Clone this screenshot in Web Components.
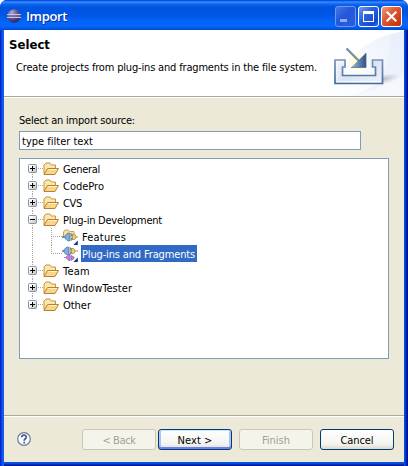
<!DOCTYPE html>
<html lang="en"><head><meta charset="utf-8"><title>Import</title>
<style>html,body{margin:0;background:#fff;overflow:hidden}body{font:11px/17px "DejaVu Sans Condensed","DejaVu Sans",sans-serif;color:#000}</style>
</head><body><import-dialog></import-dialog>
<script>
const define=(name,html,setup)=>customElements.define(name,class extends HTMLElement{
 connectedCallback(){
  if(this.shadowRoot)return;
  const t=document.createElement('template');t.innerHTML=html;
  this.attachShadow({mode:'open'}).append(t.content.cloneNode(true));
  if(setup)setup(this,this.shadowRoot);
 }
});
// Text label whose tracking is tuned to a fixed advance width.
define('fit-text','<style>:host{display:block;white-space:pre;flex:none}span{display:inline-block}</style><span></span>',(h,r)=>{
 const s=r.querySelector('span'),v=h.getAttribute('text'),w=+h.getAttribute('w');s.textContent=v;
 s.style.letterSpacing=(w-s.getBoundingClientRect().width)/v.length+'px';
});
define('eclipse-logo',`<style>:host{display:block;width:16px;height:16px}svg{display:block}</style>
<svg width="16" height="16"><defs><radialGradient id="g" cx=".35" cy=".25" r=".8"><stop offset="0" stop-color="#b9a9d2"/><stop offset=".45" stop-color="#695999"/><stop offset="1" stop-color="#29205e"/></radialGradient></defs>
<circle cx="8" cy="8" r="6.7" fill="url(#g)"/><path d="M1 6.5H15M1 9.5H15" stroke="#c5c6e2"/><path d="M1.5 8H14.5" stroke="#7776b1"/></svg>`);
define('caption-button',`<style>:host{display:block;box-sizing:border-box;width:21px;height:21px;border:1px solid #fff;border-radius:3px;background:linear-gradient(135deg,#6f99f4,#2c62df 40%,#1748cd 80%,#2c70ef)}
:host([kind=min]){border-color:#7397ed;background:linear-gradient(135deg,#4776e7,#2356da 45%,#2961df)}
:host([kind=close]){background:linear-gradient(135deg,#f09a80,#e05a35 40%,#cf3a12 80%,#b93410)}svg{display:block}</style><svg width="19" height="19"></svg>`,(h,r)=>{
 r.querySelector('svg').innerHTML={min:'<path d="M4 12H11V15H4Z" fill="#8fabf0"/>',max:'<path d="M4 4H15V15H4ZM5 7V14H14V7Z" fill="#fff" fill-rule="evenodd"/>',close:'<path d="M4.7 4.7L14.3 14.3M14.3 4.7L4.7 14.3" stroke="#fff" stroke-width="2.2"/>'}[h.getAttribute('kind')];
});
define('title-bar',`<style>:host{display:flex;box-sizing:border-box;height:30px;padding:6px 6px 0;border-radius:7px 7px 0 0;background:linear-gradient(#0831d9 0,#0d66ef 1px,#3b8dfb 2px,#0f68ef 4px,#0054df 7px,#0055e5 15px,#0463f7 21px,#0566fc 26px,#005bec 28px,#0048cd 30px)}
eclipse-logo{margin-top:2px}fit-text{margin:0 0 0 4px;font:600 13px/21px "Open Sans",sans-serif;color:#fff;text-shadow:1px 1px #10309b}div{display:flex;gap:2px;margin-left:auto}</style>
<eclipse-logo></eclipse-logo><fit-text text="Import" w="41"></fit-text><div><caption-button kind="min"></caption-button><caption-button kind="max"></caption-button><caption-button kind="close"></caption-button></div>`);
define('import-art',`<style>:host{display:block;width:75px;height:66px;margin-left:auto}svg{display:block}</style>
<svg width="75" height="66" viewBox="329 30 75 66"><defs>
<linearGradient id="a" x1="0" y1="1" x2="1" y2="0"><stop offset="0" stop-color="#fff"/><stop offset="1" stop-color="#dfe8f8"/></linearGradient>
<linearGradient id="b" x1="0" y1="0" x2="1" y2="1"><stop offset="0" stop-color="#f1f6fc"/><stop offset=".5" stop-color="#dce4f1"/><stop offset="1" stop-color="#eef3fb"/></linearGradient>
<linearGradient id="c" x1="0" y1="0" x2="0" y2="1"><stop offset="0" stop-color="#7893b8"/><stop offset="1" stop-color="#426ba4"/></linearGradient>
<linearGradient id="d" x1="0" x2="1"><stop offset="0" stop-color="#a3bad5"/><stop offset="1" stop-color="#2b5387"/></linearGradient>
<radialGradient id="y"><stop offset="0" stop-color="#fffbd0"/><stop offset=".7" stop-color="#fffce0"/><stop offset="1" stop-color="#fff" stop-opacity="0"/></radialGradient>
<radialGradient id="s"><stop offset="0" stop-color="#8e8ca5" stop-opacity=".55"/><stop offset="1" stop-color="#bbb4c5" stop-opacity="0"/></radialGradient></defs>
<path d="M329 96C340 60 365 38 404 31V96Z" fill="url(#a)" opacity=".6"/><path d="M347 96C381 91 389 68 391 35L404 31V96Z" fill="#e5edfa" opacity=".5"/><path d="M329 96C365 97 390 83 404 74V96Z" fill="#fff" opacity=".4"/>
<ellipse cx="384" cy="79" rx="17" ry="5" fill="url(#s)" transform="rotate(-12 384 79)"/><circle cx="358" cy="62" r="11" fill="url(#y)"/>
<path d="M335 60H345V67H342.5V75.5H375.5V67H372.5V60H382.5V83.5H335Z" fill="url(#b)" stroke="url(#c)" stroke-width="1.7"/><path d="M337 81.5V62H343.5M337 81.5H380.5" fill="none" stroke="#fff" opacity=".7"/>
<path d="M346.5 48.5L359 61" stroke="#7890ac" stroke-width="2.4"/><path d="M366 53V67.5H351Z" fill="url(#d)"/><path d="M351 67.5H366V53" fill="none" stroke="#4c6c96" stroke-width=".8"/></svg>`);
define('wizard-header',`<style>:host{display:flex;box-sizing:border-box;height:68px;background:#fff;border-bottom:1px solid #fff;box-shadow:inset 0 -1px #aca899}
div{padding:6px 0 0 5px}fit-text.h{font:bold 13px/18px "DejaVu Sans Condensed",sans-serif}fit-text.d{margin:5px 0 0 7px}</style>
<div><fit-text class="h" text="Select" w="41"></fit-text><fit-text class="d" text="Create projects from plug-ins and fragments in the file system." w="301"></fit-text></div><import-art></import-art>`);
define('filter-field',`<style>:host{display:block;box-sizing:border-box;width:342px;height:19px;border:1px solid #7f9db9;background:#fff;padding:1px 2px}</style><fit-text text="type filter text" w="71"></fit-text>`);
define('tree-icon','<style>:host{display:block;width:16px;height:16px;flex:none}svg{display:block}</style><svg width="16" height="16"></svg>',(h,r)=>{
 const folder='<path d="M1 13V4L3 2H7L8.5 4H12.5V7" fill="#fae7ab" stroke="#c8943f"/><path d="M1 13.5L4.5 7.5H15.5L12 13.5Z" fill="#f9d686" stroke="#b98032"/><path d="M5 8.5H14" stroke="#fff2c6"/>';
 const arrow='<path d="M15.8 11.5V16H11.3Z" fill="#123d78"/>';
 const plug=(c,d)=>`<path d="M0 7H3M9 5H11M9 9H11" stroke="${d}" fill="none" stroke-width="1.3"/><path d="M3 5.5L6 3H7.5V11H6L3 8.5Z" fill="${c}" stroke="${d}" stroke-width=".8"/><path d="M9 3V11" stroke="${d}"/>`;
 r.querySelector('svg').innerHTML={folder,
 feature:'<path d="M1.5 9V3L3 1H6L7.5 2.5H12V6" fill="#fae3a2" stroke="#cda049"/><g transform="translate(0 1)">'+plug('#81aed7','#547eab')+'</g><path d="M10.5 5.5H12.5L14 7V9L12.5 10.5H10.5ZM14 8H16" fill="#f3cf68" stroke="#a18b4d" stroke-width=".8"/>'+arrow,
 plug:'<g transform="translate(-1 -2)">'+plug('#81aed7','#547eab')+'</g><path d="M9.5 2.5H11.5L13 4V6L11.5 7.5H9.5ZM13 5H16" fill="#f3cf68" stroke="#a18b4d" stroke-width=".8"/><path d="M2 11.5H4M4.5 10.5L7 8.5H8V14.5H7L4.5 12.5ZM9 9.5L12 11V12.5L9 14.5Z" fill="#c083d9" stroke="#9460b5" stroke-width=".8"/>'+arrow}[h.getAttribute('kind')];
});
define('tree-row',`<style>:host{display:flex;height:17px;padding-left:8px;align-items:stretch}svg{display:block;flex:none}
tree-icon{margin-top:1px}.t{box-sizing:border-box;margin-left:3px;padding:1px 1px 0;height:17px}:host([selected]) .t{background:#316ac5;color:#fff;padding-right:2px}</style>
<svg class="guides" height="17"></svg>`,(h,r)=>{
 const child=h.hasAttribute('child'),open=h.hasAttribute('open'),pos=h.getAttribute('pos'),g=r.querySelector('svg');
 g.setAttribute('width',child?34:15);
 const line=d=>`<path d="${d}" stroke="#aca899" stroke-dasharray="1 1" fill="none"/>`;
 let s='';
 if(child)s=line('M4.5 0V17')+line(pos==='last'?'M23.5 0V9':'M23.5 0V17')+line('M23 8.5H34');
 else{
  s=(pos==='first'?'':line('M4.5 0V4'))+(pos==='last'?'':line('M4.5 14V17'))+line('M10 8.5H15');
  s+='<defs><linearGradient id="x" x1="0" y1="0" x2="1" y2="1"><stop offset=".25" stop-color="#fff"/><stop offset="1" stop-color="#c2b9a7"/></linearGradient></defs><rect x=".5" y="4.5" width="8" height="8" rx="1" fill="url(#x)" stroke="#7898b5"/><path d="M2 8.5H7'+(open?'':'M4.5 6V11')+'" stroke="#000"/>';
 }
 g.innerHTML=s;
 const icon=document.createElement('tree-icon'),box=document.createElement('div'),t=document.createElement('fit-text');
 icon.setAttribute('kind',h.getAttribute('icon')||'folder');box.className='t';
 t.setAttribute('text',h.getAttribute('text'));t.setAttribute('w',h.getAttribute('w'));
 box.append(t);r.append(icon,box);
});
define('source-tree',`<style>:host{display:block;box-sizing:border-box;width:370px;height:201px;border:1px solid #7f9db9;background:#fff;padding-top:1px}</style>
<tree-row pos="first" text="General" w="37"></tree-row><tree-row text="CodePro" w="41"></tree-row><tree-row text="CVS" w="19"></tree-row><tree-row open text="Plug-in Development" w="99"></tree-row>
<tree-row child icon="feature" text="Features" w="44"></tree-row><tree-row child pos="last" selected icon="plug" text="Plug-ins and Fragments" w="113"></tree-row>
<tree-row text="Team" w="27"></tree-row><tree-row text="WindowTester" w="69"></tree-row><tree-row pos="last" text="Other" w="28"></tree-row>`);
define('push-button',`<style>:host{display:flex;justify-content:center;box-sizing:border-box;width:74px;height:21px;border:1px solid #003c74;border-radius:3px;padding-top:2px;background:linear-gradient(#fff,#f3f3ee 75%,#dcd8cd)}
:host([primary]){box-shadow:inset 0 1px #cee7ff,inset 0 -2px #6982ee,inset 2px 0 #a9c6f2,inset -2px 0 #a9c6f2}:host([disabled]){border-color:#c9c7ba;background:#f5f4ea;color:#a1a192}</style><slot></slot>`);
define('help-icon',`<style>:host{display:block;width:14px;height:14px}svg{display:block}</style>
<svg width="14" height="14"><circle cx="7" cy="7" r="6.3" fill="#f9fbff" stroke="#687f9b" stroke-width="1.2"/><path d="M4.7 5.3C4.8 2.5 9.3 2.6 9.3 5.1C9.3 6.8 7.2 6.7 7.2 8.7" fill="none" stroke="#405d80" stroke-width="1.7"/><path d="M6.3 9.8H8.1V11.5H6.3Z" fill="#405d80"/></svg>`);
define('wizard-footer',`<style>:host{display:flex;box-sizing:border-box;height:47px;border-top:1px solid #aca899;box-shadow:inset 0 1px #fff;padding:13px 10px 0 13px}help-icon{margin:3px 51px 0 0}push-button+push-button{margin-left:7px}push-button[primary]{margin-left:2px}</style>
<help-icon></help-icon><push-button disabled><fit-text text="&lt; Back" w="33"></fit-text></push-button><push-button primary><fit-text text="Next &gt;" w="35"></fit-text></push-button><push-button disabled><fit-text text="Finish" w="28"></fit-text></push-button><push-button><fit-text text="Cancel" w="33"></fit-text></push-button>`);
define('import-dialog',`<style>:host{display:flex;flex-direction:column;box-sizing:border-box;width:408px;height:466px;border-radius:7px 7px 0 0;background:#0831d9}
.frame{display:flex;flex-direction:column;flex:1;box-sizing:border-box;padding:0 4px 4px;background:linear-gradient(90deg,#0019cf 0,#0831d9 1px,#166aee 3px,#0855dd 4px,transparent 4px,transparent 404px,#0855dd 404px,#0441d8 405px,#0030c0 406px,#001590 407px,#00138c),linear-gradient(#0855dd 0,#0855dd 432px,#0855dd 433px,#0441d8 434px,#001ea0 435px,#00138c)}
.client{display:flex;flex-direction:column;flex:1;background:#ece9d8}.body{flex:1;padding:14px 15px 0}filter-field{margin:2px 0 8px}</style>
<title-bar></title-bar><div class="frame"><div class="client"><wizard-header></wizard-header><div class="body"><fit-text text="Select an import source:" w="116"></fit-text><filter-field></filter-field><source-tree></source-tree></div><wizard-footer></wizard-footer></div></div>`);
</script></body></html>
